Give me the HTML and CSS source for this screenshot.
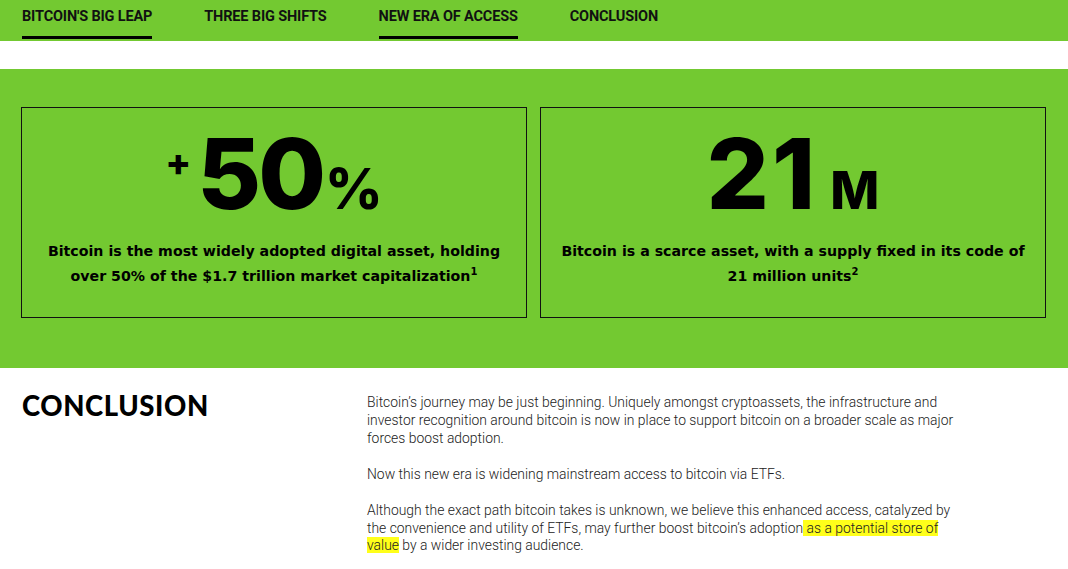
FILE: index.html
```html
<!DOCTYPE html>
<html lang="en">
<head>
    <meta charset="UTF-8">
    <meta name="viewport" content="width=device-width, initial-scale=1.0">
    <title>Bitcoin: A New Era of Access</title>
    <link rel="stylesheet" href="styles.css">
</head>
<body>
    <nav class="tabs">
        <a class="tab active" href="#leap">BITCOIN'S BIG LEAP</a>
        <a class="tab" href="#shifts">THREE BIG SHIFTS</a>
        <a class="tab active" href="#access">NEW ERA OF ACCESS</a>
        <a class="tab" href="#conclusion">CONCLUSION</a>
    </nav>

    <div class="gap"></div>

    <section class="stats">
        <div class="card">
            <div class="figure">
                <span class="pre">+</span><span class="num">50</span><span class="unit pct">%</span>
            </div>
            <p class="desc">Bitcoin is the most widely adopted digital asset, holding over 50% of the $1.7 trillion market capitalization<sup>1</sup></p>
        </div>
        <div class="card">
            <div class="figure">
                <span class="num wide">21</span><span class="unit">M</span>
            </div>
            <p class="desc">Bitcoin is a scarce asset, with a supply fixed in its code of 21&nbsp;million units<sup>2</sup></p>
        </div>
    </section>

    <section class="conclusion" id="conclusion">
        <h2>CONCLUSION</h2>
        <div class="body">
            <p>Bitcoin’s journey may be just beginning. Uniquely amongst cryptoassets, the infrastructure and investor recognition around bitcoin is now in place to support bitcoin on a broader scale as major forces boost adoption.</p>
            <p>Now this new era is widening mainstream access to bitcoin via ETFs.</p>
            <p>Although the exact path bitcoin takes is unknown, we believe this enhanced access, catalyzed by the convenience and utility of ETFs, may further boost bitcoin’s adoption<mark> as a potential store of value</mark> by a wider investing audience.</p>
        </div>
    </section>
</body>
</html>
```

FILE: styles.css
```css
body {
    margin: 0;
    font-family: Roboto, "Liberation Sans", sans-serif;
    color: #000;
    background: #fff;
}
.tabs {
    display: flex;
    gap: 52px;
    height: 41px;
    padding: 0 22px;
    background-color: #73c931;
    box-sizing: border-box;
}
.tab {
    display: block;
    padding-top: 8px;
    height: 39px;
    box-sizing: border-box;
    border-bottom: 3px solid transparent;
    color: #111;
    text-decoration: none;
    font-weight: bold;
    font-size: 14.5px;
    letter-spacing: -0.15px;
}
.tab.active {
    border-bottom-color: #000;
}
.gap {
    height: 28px;
}
.stats {
    display: grid;
    grid-template-columns: 1fr 1fr;
    gap: 13px;
    padding: 38px 22px 50px 21px;
    background-color: #73c931;
}
.card {
    height: 211px;
    box-sizing: border-box;
    border: 1px solid #111;
    text-align: center;
    padding: 0 12px;
}
.figure {
    display: flex;
    justify-content: center;
    align-items: baseline;
    height: 124px;
    font-family: Inter, sans-serif;
    font-weight: 800;
}
.num {
    font-size: 98px;
    line-height: 132px;
    letter-spacing: -3px;
}
.num.wide {
    letter-spacing: 3px;
}
.pre {
    font-size: 38px;
    align-self: flex-start;
    margin-top: 31px;
    margin-right: 6px;
}
.unit {
    font-size: 52px;
    margin-left: 12px;
}
.pct {
    font-size: 56px;
    margin-left: 2px;
}
.desc {
    margin: 7px 0 0;
    font-family: "DejaVu Sans", sans-serif;
    font-weight: bold;
    font-size: 14.2px;
    line-height: 25px;
}
.desc sup {
    font-size: 10px;
    line-height: 0;
}
.conclusion {
    display: grid;
    grid-template-columns: 345px 595px;
    padding: 26px 22px 24px;
}
.conclusion h2 {
    margin: -5px 0 0;
    font-family: Lato, sans-serif;
    font-weight: 900;
    font-size: 27.5px;
    letter-spacing: 0.6px;
}
.body p {
    margin: 0 0 18px;
    font-size: 13.9px;
    line-height: 17.9px;
    color: #222;
    font-weight: 300;
}
mark {
    background-color: #ffff1a;
    color: inherit;
}
```
